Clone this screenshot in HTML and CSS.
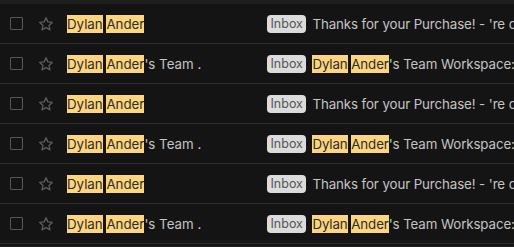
FILE: index.html
```html
<!DOCTYPE html>
<html>
<head>
<meta charset="utf-8">
<link rel="stylesheet" href="styles.css">
</head>
<body>
<div class="topbar"></div>
<div class="list">
  <div class="row">
    <span class="check"></span>
    <svg class="star" viewBox="0 0 24 24"><path d="M12 3.6l2.5 5.6 6.1.6-4.6 4.1 1.3 6-5.3-3.1-5.3 3.1 1.3-6-4.6-4.1 6.1-.6z" fill="none" stroke="#5c5c5c" stroke-width="1.8" stroke-linejoin="round"/></svg>
    <div class="sender"><mark>Dylan</mark> <mark>Ander</mark></div>
    <div class="subject"><span class="badge">Inbox</span>Thanks for your Purchase! - 're confirming your order</div>
  </div>
  <div class="row">
    <span class="check"></span>
    <svg class="star" viewBox="0 0 24 24"><path d="M12 3.6l2.5 5.6 6.1.6-4.6 4.1 1.3 6-5.3-3.1-5.3 3.1 1.3-6-4.6-4.1 6.1-.6z" fill="none" stroke="#5c5c5c" stroke-width="1.8" stroke-linejoin="round"/></svg>
    <div class="sender"><mark>Dylan</mark> <mark>Ander</mark>'s Team .</div>
    <div class="subject"><span class="badge">Inbox</span><mark>Dylan</mark> <mark>Ander</mark>'s Team Workspace: new activity</div>
  </div>
  <div class="row">
    <span class="check"></span>
    <svg class="star" viewBox="0 0 24 24"><path d="M12 3.6l2.5 5.6 6.1.6-4.6 4.1 1.3 6-5.3-3.1-5.3 3.1 1.3-6-4.6-4.1 6.1-.6z" fill="none" stroke="#5c5c5c" stroke-width="1.8" stroke-linejoin="round"/></svg>
    <div class="sender"><mark>Dylan</mark> <mark>Ander</mark></div>
    <div class="subject"><span class="badge">Inbox</span>Thanks for your Purchase! - 're confirming your order</div>
  </div>
  <div class="row">
    <span class="check"></span>
    <svg class="star" viewBox="0 0 24 24"><path d="M12 3.6l2.5 5.6 6.1.6-4.6 4.1 1.3 6-5.3-3.1-5.3 3.1 1.3-6-4.6-4.1 6.1-.6z" fill="none" stroke="#5c5c5c" stroke-width="1.8" stroke-linejoin="round"/></svg>
    <div class="sender"><mark>Dylan</mark> <mark>Ander</mark>'s Team .</div>
    <div class="subject"><span class="badge">Inbox</span><mark>Dylan</mark> <mark>Ander</mark>'s Team Workspace: new activity</div>
  </div>
  <div class="row">
    <span class="check"></span>
    <svg class="star" viewBox="0 0 24 24"><path d="M12 3.6l2.5 5.6 6.1.6-4.6 4.1 1.3 6-5.3-3.1-5.3 3.1 1.3-6-4.6-4.1 6.1-.6z" fill="none" stroke="#5c5c5c" stroke-width="1.8" stroke-linejoin="round"/></svg>
    <div class="sender"><mark>Dylan</mark> <mark>Ander</mark></div>
    <div class="subject"><span class="badge">Inbox</span>Thanks for your Purchase! - 're confirming your order</div>
  </div>
  <div class="row">
    <span class="check"></span>
    <svg class="star" viewBox="0 0 24 24"><path d="M12 3.6l2.5 5.6 6.1.6-4.6 4.1 1.3 6-5.3-3.1-5.3 3.1 1.3-6-4.6-4.1 6.1-.6z" fill="none" stroke="#5c5c5c" stroke-width="1.8" stroke-linejoin="round"/></svg>
    <div class="sender"><mark>Dylan</mark> <mark>Ander</mark>'s Team .</div>
    <div class="subject"><span class="badge">Inbox</span><mark>Dylan</mark> <mark>Ander</mark>'s Team Workspace: new activity</div>
  </div>
</div>
<div class="bottom"></div>
</body>
</html>
```
FILE: styles.css
```css
html, body {
  margin: 0;
  padding: 0;
  background: #141414;
  overflow: hidden;
}
body {
  width: 514px;
  height: 247px;
  font-family: Inter, Roboto, "Liberation Sans", sans-serif;
  font-size: 13.3px;
  color: #c4c4c4;
}
.topbar {
  height: 4px;
  background: #1f1f1f;
}
.row {
  display: flex;
  align-items: center;
  height: 39px;
  border-bottom: 1px solid #2e2e2e;
  white-space: nowrap;
  overflow: hidden;
}
.check {
  flex: none;
  width: 11px;
  height: 11px;
  margin-left: 10px;
  border: 1.5px solid #575757;
  border-radius: 1px;
}
.star {
  flex: none;
  width: 18px;
  height: 18px;
  margin-left: 14px;
}
.sender {
  flex: none;
  width: 200px;
  margin-left: 12px;
  line-height: 18px;
}
.subject {
  flex: none;
  line-height: 18px;
  letter-spacing: -0.1px;
}
mark {
  display: inline-block;
  vertical-align: top;
  line-height: 18px;
  background: #fdd57d;
  color: #2c2c2c;
}
.badge {
  display: inline-block;
  vertical-align: top;
  background: #dcdcdc;
  color: #555;
  border-radius: 4px;
  height: 18px;
  line-height: 18px;
  padding: 0 3.5px;
  margin-right: 6px;
  font-size: 12.5px;
  letter-spacing: 0;
}
.bottom {
  height: 4px;
  background: linear-gradient(#0c0c0c, #2a2a2a);
}
```
